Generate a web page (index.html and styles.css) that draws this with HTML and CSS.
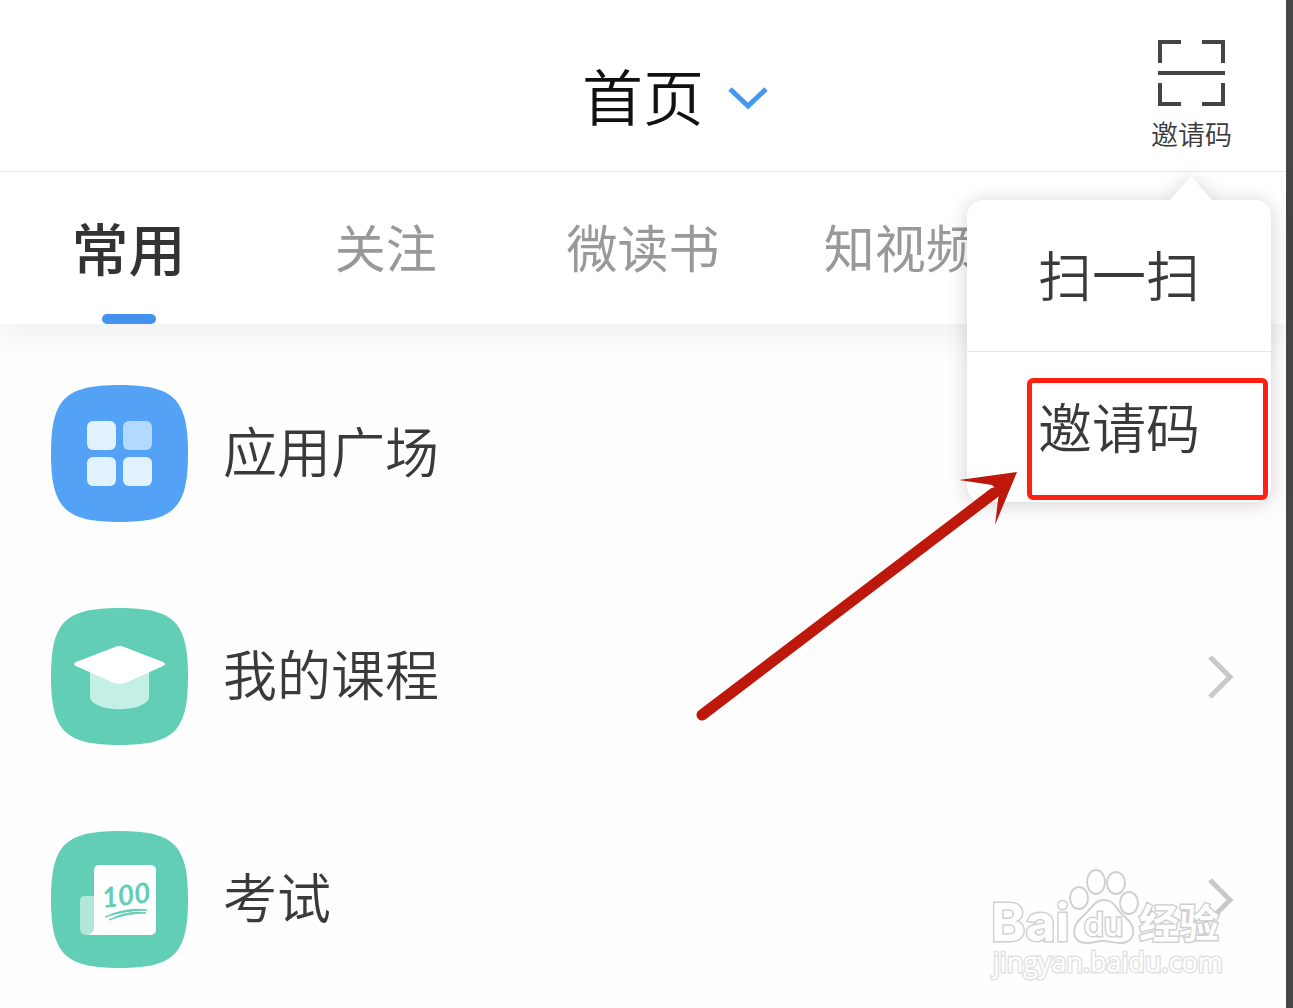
FILE: index.html
```html
<!DOCTYPE html>
<html lang="zh-CN">
<head>
  <meta charset="UTF-8">
  <meta name="viewport" content="width=device-width, initial-scale=1">
  <title>首页</title>
  <link rel="stylesheet" href="styles.css">
</head>
<body>
  <div class="page">
    <header class="header">
      <h1 class="title">首页</h1>
      <div class="header-side">
        <button class="title-toggle" aria-label="切换">
          <svg width="42" height="24" viewBox="0 0 42 24"><path d="M2 2 L20 19 L38 2" fill="none" stroke="#4598ee" stroke-width="5"/></svg>
        </button>
        <div class="scan">
          <button class="scan-button">
            <svg width="67" height="66" viewBox="0 0 67 66" fill="none" stroke="#444" stroke-width="4">
              <path d="M2 23V2H23M44 2H65V23M2 43V64H23M44 64H65V43M0 33H67"/>
            </svg>
            <span>邀请码</span>
          </button>
          <nav class="menu">
            <a href="#" class="menu-item">扫一扫</a>
            <a href="#" class="menu-item marked">邀请码</a>
          </nav>
        </div>
      </div>
    </header>

    <nav class="tabs">
      <a href="#" class="tab active">常用</a>
      <a href="#" class="tab">关注</a>
      <a href="#" class="tab">微读书</a>
      <a href="#" class="tab">知视频</a>
    </nav>

    <main class="list">
      <a href="#" class="row">
        <svg class="icon" viewBox="0 0 137 137">
          <path fill="#54a2f6" d="M0 68.500C0 14 14 0 68.500 0S137 14 137 68.500 123 137 68.500 137 0 123 0 68.500Z"/>
          <g fill="#e2f2fd">
            <rect x="36" y="36" width="29" height="29" rx="6"/>
            <rect x="72" y="36" width="29" height="29" rx="6" fill="#b3dafc"/>
            <rect x="36" y="72" width="29" height="29" rx="6"/>
            <rect x="72" y="72" width="29" height="29" rx="6"/>
          </g>
        </svg>
        <span class="name">应用广场</span>
      </a>
      <a href="#" class="row">
        <svg class="icon" viewBox="0 0 137 137">
          <path fill="#62ceb5" d="M0 68.500C0 14 14 0 68.500 0S137 14 137 68.500 123 137 68.500 137 0 123 0 68.500Z"/>
          <path fill="#c4efe5" d="M39 60V90C44 105 93 105 98 90V60Z"/>
          <path fill="#fff" d="M64 39Q68.500 37 73 39L112 54Q116 56 112 58L74 75Q68.500 77 63 75L25 58Q21 56 25 54Z"/>
        </svg>
        <span class="name">我的课程</span>
        <svg class="arrow" viewBox="0 0 26 44"><path d="M2 2 L22 22 L2 42"/></svg>
      </a>
      <a href="#" class="row">
        <svg class="icon" viewBox="0 0 137 137">
          <path fill="#62ceb5" d="M0 68.500C0 14 14 0 68.500 0S137 14 137 68.500 123 137 68.500 137 0 123 0 68.500Z"/>
          <rect x="43" y="34" width="62" height="70" rx="5" fill="#fff"/>
          <path fill="#fff" d="M36 104L46 92V104Z"/>
          <path fill="#b1e8da" d="M34 65H43V97Q42 104 36 104Q29 104 29 97V70Q29 65 34 65Z"/>
          <text class="score" x="52" y="77" transform="rotate(-7 52 77)">100</text>
          <path fill="#62ceb5" d="M54 86Q75 76 96 79Q75 79 54 86ZM58 89Q76 79 95 82Q76 82 58 89Z" stroke="#62ceb5"/>
        </svg>
        <span class="name">考试</span>
        <svg class="arrow" viewBox="0 0 26 44"><path d="M2 2 L22 22 L2 42"/></svg>
      </a>
    </main>

    <!-- pointer to the invite code entry -->
    <svg class="pointer" width="328" height="256" viewBox="0 0 328 256" fill="#bd180b">
      <path d="M12 247L304 25" stroke="#bd180b" stroke-width="11" stroke-linecap="round"/>
      <path d="M327 4L269 12L302 17L309 24L305 57Z"/>
    </svg>

    <svg class="watermark" width="236" height="116" viewBox="0 0 236 116">
      <g fill="#fff" stroke="#d0d0d0" stroke-width="2">
        <ellipse cx="89" cy="30" rx="9" ry="11"/>
        <ellipse cx="106" cy="14" rx="9" ry="12"/>
        <ellipse cx="126" cy="15" rx="9" ry="11"/>
        <ellipse cx="139" cy="35" rx="9" ry="11"/>
        <path d="M114 32C125 32 125 41 135 49C149 61 144 75 130 75C122 75 119 73 113 73C106 73 104 75 97 75C83 75 79 61 92 49C103 40 104 32 114 32Z"/>
        <text class="mark-bai" x="1" y="73">Bai</text>
        <text class="mark-du" x="94" y="68">du</text>
        <text class="mark-cn" x="149" y="70">经验</text>
        <text class="mark-url" x="3" y="104">jingyan.baidu.com</text>
      </g>
    </svg>
  </div>
</body>
</html>
```
FILE: styles.css
```css
*,
*::before,
*::after {
  box-sizing: border-box;
}

body {
  margin: 0;
  background: #fefefe;
  color: #3a3a3a;
  font-family: "Noto Sans CJK SC", sans-serif;
  font-weight: 350;
}

a {
  color: inherit;
  text-decoration: none;
}

button {
  padding: 0;
  border: none;
  background: none;
  color: inherit;
  font: inherit;
  cursor: pointer;
}

svg {
  display: block;
}

.page {
  position: relative;
  min-height: 100vh;
  border-right: 7px solid #464646;
}

.header {
  display: grid;
  position: relative;
  z-index: 1;
  grid-template-columns: 1fr auto 1fr;
  align-items: center;
  height: 172px;
  background: #fff;
  border-bottom: 1px solid #ebebeb;
}

.title {
  grid-column: 2;
  margin: 0;
  padding-top: 18px;
  color: #111;
  font-size: 61px;
  font-weight: 350;
  line-height: 72px;
}

.header-side {
  display: flex;
  align-items: center;
  justify-content: space-between;
  padding: 18px 54px 0 24px;
}

.title-toggle {
  padding-top: 8px;
}

.scan {
  position: relative;
}

.scan-button {
  display: flex;
  flex-direction: column;
  align-items: center;
  gap: 12px;
  font-size: 27px;
  line-height: 32px;
}

.menu {
  position: absolute;
  top: 160px;
  right: -39px;
  width: 304px;
  background: #fff;
  border-radius: 16px;
  filter: drop-shadow(0 2px 10px rgba(0, 0, 0, 0.18));
}

.menu::before {
  content: "";
  position: absolute;
  top: -24px;
  right: 59px;
  border: 21px solid transparent;
  border-top: none;
  border-bottom: 24px solid #fff;
}

.menu-item {
  display: block;
  position: relative;
  height: 151px;
  font-size: 54px;
  line-height: 147px;
  text-align: center;
}

.menu-item + .menu-item {
  border-top: 1px solid #e4e4e4;
}

.marked::after {
  content: "";
  position: absolute;
  top: 26px;
  right: 3px;
  width: 241px;
  height: 122px;
  border: 5px solid #ff2012;
  border-radius: 6px;
}

.tabs {
  display: grid;
  grid-template-columns: repeat(5, 1fr);
  height: 152px;
  background: #fff;
  box-shadow: 0 16px 32px rgba(0, 0, 0, 0.05);
}

.tab {
  position: relative;
  color: #999;
  font-size: 51px;
  font-weight: 400;
  line-height: 148px;
  text-align: center;
  white-space: nowrap;
}

.active {
  color: #333;
  font-size: 57px;
  font-weight: 500;
}

.active::after {
  content: "";
  position: absolute;
  bottom: 0;
  left: 50%;
  width: 54px;
  height: 10px;
  margin-left: -27px;
  background: #4393ee;
  border-radius: 5px;
}

.list {
  display: flex;
  flex-direction: column;
  gap: 86px;
  padding: 61px 52px 40px 51px;
}

.row {
  display: flex;
  align-items: center;
  gap: 35px;
}

.icon {
  width: 137px;
  height: 137px;
}

.name {
  flex: 1;
  padding-bottom: 8px;
  font-size: 54px;
  line-height: 80px;
}

.arrow {
  width: 26px;
  height: 44px;
  fill: none;
  stroke: #c9c9c9;
  stroke-width: 5;
}

.score {
  fill: #62ceb5;
  font-family: Lato, sans-serif;
  font-size: 28px;
  font-style: italic;
  font-weight: 700;
}

.pointer {
  position: absolute;
  z-index: 2;
  top: 468px;
  right: 268px;
}

.watermark {
  position: absolute;
  right: 60px;
  bottom: 24px;
}

.watermark text {
  paint-order: stroke;
  stroke-width: 3;
}

.mark-bai {
  font-family: Inter, sans-serif;
  font-size: 52px;
  font-weight: 700;
}

.mark-du {
  font-family: Inter, sans-serif;
  font-size: 32px;
  font-weight: 500;
}

.mark-cn {
  font-size: 40px;
  font-weight: 700;
}

.mark-url {
  font-family: "Open Sans", sans-serif;
  font-size: 27px;
  font-weight: 400;
  stroke: #e2e2e2;
}
```
